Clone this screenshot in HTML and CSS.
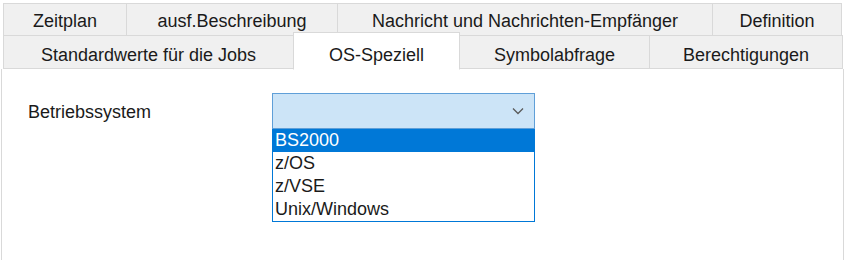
FILE: index.html
```html
<!DOCTYPE html>
<html lang="de">
<head>
  <meta charset="UTF-8" />
  <title>OS-Speziell</title>
  <link rel="stylesheet" href="styles.css">
</head>
<body>
  <div class="dialog">
    <div class="tabs">
      <div class="tab-row row-top">
        <div class="tab w-zeit">Zeitplan</div>
        <div class="tab w-ausf">ausf.Beschreibung</div>
        <div class="tab w-nachr">Nachricht und Nachrichten-Empfänger</div>
        <div class="tab w-def">Definition</div>
      </div>
      <div class="tab-row row-bottom">
        <div class="tab w-std">Standardwerte für die Jobs</div>
        <div class="tab w-os active">OS-Speziell</div>
        <div class="tab w-sym">Symbolabfrage</div>
        <div class="tab w-ber">Berechtigungen</div>
      </div>
    </div>

    <div class="panel">
      <div class="field">
        <label class="field-label">Betriebssystem</label>
        <div class="combo">
          <div class="combo-head">
            <svg class="chevron" width="12" height="8" viewBox="0 0 12 8">
              <polyline points="1,1.5 6,6.5 11,1.5" fill="none" stroke="#5a5a5a" stroke-width="1.3"/>
            </svg>
          </div>
          <ul class="combo-list">
            <li class="selected">BS2000</li>
            <li>z/OS</li>
            <li>z/VSE</li>
            <li>Unix/Windows</li>
          </ul>
        </div>
      </div>
    </div>
  </div>
</body>
</html>
```

FILE: styles.css
```css
* {
  box-sizing: border-box;
}
body {
  margin: 0;
  background: #ffffff;
  font-family: 'Liberation Sans', Arial, sans-serif;
  font-size: 18px;
  line-height: 20px;
  color: #1a1a1a;
}
.dialog {
  width: 846px;
  height: 260px;
  padding-top: 3px;
}
.tabs {
  padding-left: 3px;
}
.tab-row {
  display: flex;
}
.tab {
  background: #f0f0f0;
  border: 1px solid #d9d9d9;
  margin-left: -1px;
  text-align: center;
  white-space: nowrap;
}
.tab:first-child {
  margin-left: 0;
}
.row-top .tab {
  height: 33px;
  padding-top: 7px;
}
.row-bottom {
  margin-top: -1px;
}
.row-bottom .tab {
  height: 34px;
  padding-top: 9px;
}
.tab.active {
  position: relative;
  z-index: 2;
  background: #ffffff;
  border-bottom-color: #ffffff;
  margin-top: -3px;
  height: 38px;
  padding-top: 12px;
}
.w-zeit { width: 124px; }
.w-ausf { width: 212px; }
.w-nachr { width: 376px; }
.w-def { width: 130px; }
.w-std { width: 291px; }
.w-os { width: 167px; }
.w-sym { width: 191px; }
.w-ber { width: 194px; }

.panel {
  margin: -1px 2px 0 1px;
  height: 195px;
  background: #ffffff;
  border-left: 1px solid #d9d9d9;
  border-right: 1px solid #d9d9d9;
  padding: 24px 0 0 26px;
}
.field {
  display: flex;
  align-items: flex-start;
}
.field-label {
  width: 244px;
  padding-top: 9px;
}
.combo {
  width: 263px;
}
.combo-head {
  height: 36px;
  background: #cce4f7;
  border: 1px solid #5f9fd8;
  display: flex;
  align-items: center;
  justify-content: flex-end;
  padding-right: 10px;
}
.combo-list {
  list-style: none;
  margin: 0;
  padding: 0;
  border: 1px solid #0078d7;
  border-top: none;
}
.combo-list li {
  height: 23px;
  line-height: 23px;
  padding-left: 2px;
}
.combo-list li.selected {
  background: #0078d7;
  color: #ffffff;
}
```
